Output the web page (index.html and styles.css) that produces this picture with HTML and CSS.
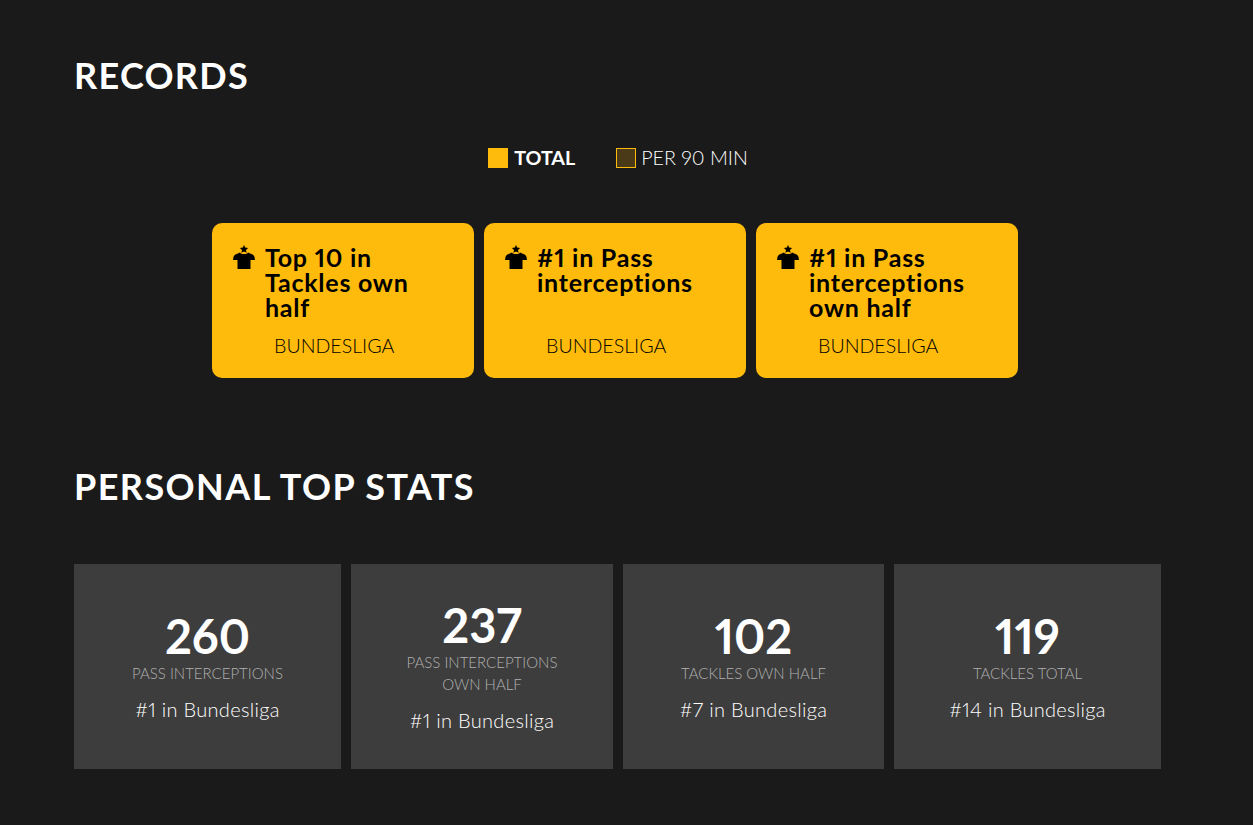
FILE: index.html
```html
<!DOCTYPE html>
<html lang="en">
<head>
    <meta charset="UTF-8">
    <title>Records</title>
    <link rel="stylesheet" href="styles.css">
</head>
<body>
    <svg class="defs" width="0" height="0">
        <symbol id="shirt-star" viewBox="0 0 22 24">
            <path d="M11 0l1.200 2.600 2.900.3-2.100 2 .6 2.900L11 6.400 8.400 7.800l.6-2.900-2.100-2 2.900-.3z"/>
            <path d="M7 7.500C8 9.500 14 9.500 15 7.500L19.500 9.500Q21 10.200 21.500 12L22 15H17.500V24H4.500V15H0L.5 12Q1 10.200 2.500 9.500Z"/>
        </symbol>
    </svg>
    <main class="page">
        <h2 class="section-title">RECORDS</h2>
        <div class="legend">
            <div class="legend-item active"><span class="swatch"></span>TOTAL</div>
            <div class="legend-item"><span class="swatch"></span>PER 90 MIN</div>
        </div>
        <div class="records">
            <div class="record-card">
                <div class="record-head">
                    <svg class="record-icon"><use href="#shirt-star"/></svg>
                    <h3>Top 10 in Tackles own half</h3>
                </div>
                <p class="league">BUNDESLIGA</p>
            </div>
            <div class="record-card">
                <div class="record-head">
                    <svg class="record-icon"><use href="#shirt-star"/></svg>
                    <h3>#1 in Pass interceptions</h3>
                </div>
                <p class="league">BUNDESLIGA</p>
            </div>
            <div class="record-card">
                <div class="record-head">
                    <svg class="record-icon"><use href="#shirt-star"/></svg>
                    <h3>#1 in Pass interceptions own half</h3>
                </div>
                <p class="league">BUNDESLIGA</p>
            </div>
        </div>
        <h2 class="section-title stats-title">PERSONAL TOP STATS</h2>
        <div class="stats">
            <div class="stat-card">
                <div class="stat-value">260</div>
                <div class="stat-label">PASS INTERCEPTIONS</div>
                <div class="stat-rank">#1 in Bundesliga</div>
            </div>
            <div class="stat-card">
                <div class="stat-value">237</div>
                <div class="stat-label">PASS INTERCEPTIONS<br>OWN HALF</div>
                <div class="stat-rank">#1 in Bundesliga</div>
            </div>
            <div class="stat-card">
                <div class="stat-value">102</div>
                <div class="stat-label">TACKLES OWN HALF</div>
                <div class="stat-rank">#7 in Bundesliga</div>
            </div>
            <div class="stat-card">
                <div class="stat-value">119</div>
                <div class="stat-label">TACKLES TOTAL</div>
                <div class="stat-rank">#14 in Bundesliga</div>
            </div>
        </div>
    </main>
</body>
</html>
```

FILE: styles.css
```css
:root {
    --background-color: #1A1A1A;
    --card-background: #3D3D3D;
    --accent-color: #FFBB0B;
    --muted-color: #B0B0B0;
}

body {
    font-family: 'Lato', sans-serif;
    font-variant-numeric: proportional-nums;
    margin: 0;
    background-color: var(--background-color);
    color: #FFFFFF;
}

.defs {
    display: block;
    height: 0;
}

.page {
    width: 1087px;
    margin-left: 74px;
    padding-top: 54px;
    height: 771px;
}

.section-title {
    margin: 0;
    font-size: 36px;
    line-height: 42px;
    font-weight: 700;
    letter-spacing: 1.3px;
}

.legend {
    display: flex;
    justify-content: center;
    gap: 41px;
    margin-top: 46px;
    padding-left: 1px;
}

.legend-item {
    display: flex;
    align-items: center;
    gap: 5px;
    font-size: 19.7px;
    line-height: 32px;
    font-weight: 300;
    color: #FFFFFF;
}

.legend-item.active {
    gap: 6px;
    font-weight: 700;
}

.swatch {
    width: 18px;
    height: 18px;
    border: 1px solid var(--accent-color);
    background-color: #4A3A18;
}

.legend-item.active .swatch {
    background-color: var(--accent-color);
}

.records {
    display: flex;
    justify-content: center;
    gap: 10px;
    margin-top: 49px;
    padding-right: 5px;
}

.record-card {
    width: 262px;
    height: 155px;
    box-sizing: border-box;
    padding: 22px 20px 0 21px;
    background-color: var(--accent-color);
    border-radius: 10px;
    color: #000000;
}

.record-head {
    display: flex;
    gap: 10px;
    height: 78px;
}

.record-icon {
    flex: none;
    width: 22px;
    height: 24px;
    fill: #000000;
}

.record-head h3 {
    margin: 0;
    font-size: 25px;
    line-height: 25px;
    font-weight: 700;
    letter-spacing: 0.75px;
}

.league {
    margin: 11px 0 0 41px;
    font-size: 19.6px;
    line-height: 24px;
    font-weight: 300;
}

.stats-title {
    margin-top: 87px;
    letter-spacing: 1.42px;
}

.stats {
    display: grid;
    grid-template-columns: 267px 262px 261px 267px;
    gap: 10px;
    margin-top: 57px;
}

.stat-card {
    height: 205px;
    display: flex;
    flex-direction: column;
    align-items: center;
    justify-content: center;
    background-color: var(--card-background);
    text-align: center;
}

.stat-value {
    font-size: 47px;
    line-height: 50px;
    font-weight: 700;
}

.stat-label {
    font-size: 15px;
    line-height: 22px;
    font-weight: 300;
    color: var(--muted-color);
    margin-top: 1px;
}

.stat-rank {
    font-size: 20px;
    line-height: 26px;
    font-weight: 300;
    letter-spacing: 0.3px;
    margin-top: 12px;
}
```
